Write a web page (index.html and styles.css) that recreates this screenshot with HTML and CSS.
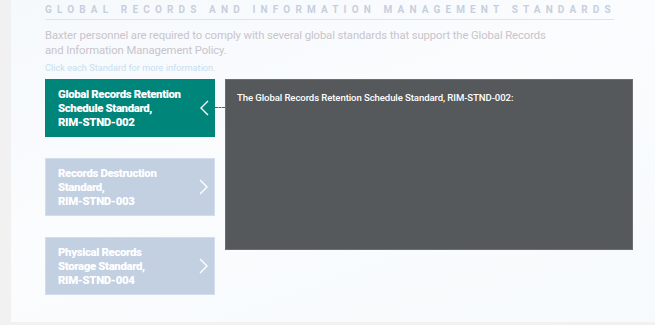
FILE: index.html
```html
<!DOCTYPE html>
<html lang="en">
<head>
<meta charset="utf-8">
<title>Global Records and Information Management Standards</title>
<link rel="stylesheet" href="styles.css">
</head>
<body>
<main class="panel">
  <h1 class="title">Global Records and Information Management Standards</h1>
  <p class="intro">Baxter personnel are required to comply with several global standards that support the Global Records and Information Management Policy.</p>
  <p class="hint">Click each Standard for more information.</p>
  <section class="stage">
    <div class="cards">
      <button class="card active">
        <span class="card-text">Global Records Retention<br>Schedule Standard,<br>RIM-STND-002</span>
        <svg class="chev" width="10" height="16" viewBox="0 0 10 16"><path d="M9 1 L2 8 L9 15" fill="none" stroke="#fff" stroke-width="1.4"/></svg>
      </button>
      <button class="card">
        <span class="card-text">Records Destruction<br>Standard,<br>RIM-STND-003</span>
        <svg class="chev" width="10" height="16" viewBox="0 0 10 16"><path d="M1 1 L8 8 L1 15" fill="none" stroke="#fff" stroke-width="1.4"/></svg>
      </button>
      <button class="card">
        <span class="card-text">Physical Records<br>Storage Standard,<br>RIM-STND-004</span>
        <svg class="chev" width="10" height="16" viewBox="0 0 10 16"><path d="M1 1 L8 8 L1 15" fill="none" stroke="#fff" stroke-width="1.4"/></svg>
      </button>
    </div>
    <div class="connector"></div>
    <div class="detail">
      <p class="detail-text">The Global Records Retention Schedule Standard, RIM-STND-002:</p>
    </div>
  </section>
</main>
</body>
</html>
```
FILE: styles.css
```css
html, body {
  margin: 0;
  padding: 0;
  background: #f1f1f1;
  width: 655px;
  height: 325px;
  overflow: hidden;
}
.panel {
  margin-left: 11px;
  width: 644px;
  height: 322px;
  box-sizing: border-box;
  padding: 0 22px 0 34px;
  background: linear-gradient(160deg, #f6f9fc 0%, #fafcfe 45%, #f7fafc 100%);
  font-family: Roboto, "Liberation Sans", sans-serif;
}
.title {
  margin: 0;
  padding-top: 3px;
  height: 16px;
  width: 569px;
  font-size: 10px;
  line-height: 13px;
  font-weight: 700;
  text-transform: uppercase;
  letter-spacing: 5.15px;
  color: #c7cfdd;
  border-bottom: 1.5px solid #d7e6f2;
  white-space: nowrap;
}
.intro {
  margin: 8px 0 0;
  font-size: 11.3px;
  line-height: 15px;
  letter-spacing: -0.1px;
  color: #c9c4cb;
  width: 510px;
}
.hint {
  margin: 4px 0 0;
  font-size: 9.2px;
  line-height: 11px;
  color: #c6def0;
}
.stage {
  display: flex;
  align-items: flex-start;
  margin-top: 6px;
}
.cards {
  display: flex;
  flex-direction: column;
  gap: 21px;
  width: 170px;
  flex: none;
}
.card {
  display: flex;
  align-items: center;
  justify-content: space-between;
  height: 58px;
  box-sizing: border-box;
  padding: 0 5px 0 12px;
  border: 1px solid #d3deec;
  background: #c2d0e2;
  text-align: left;
  font-family: Roboto, "Liberation Sans", sans-serif;
  cursor: pointer;
}
.card.active {
  background: #00857a;
  border-color: #00857a;
}
.card-text {
  font-size: 11.4px;
  line-height: 14px;
  font-weight: 900;
  color: #fff;
  letter-spacing: -0.35px;
  white-space: nowrap;
}
.chev {
  flex: none;
}
.connector {
  width: 10px;
  flex: none;
  margin-top: 28px;
  border-top: 1px dashed #5a5e61;
}
.detail {
  width: 408px;
  height: 171px;
  flex: none;
  box-sizing: border-box;
  background: #55595c;
  border: 1px solid #6b6f72;
  padding: 12px 11px;
}
.detail-text {
  margin: 0;
  font-size: 9.6px;
  line-height: 11px;
  font-weight: 500;
  color: #fff;
  letter-spacing: -0.1px;
}
```
